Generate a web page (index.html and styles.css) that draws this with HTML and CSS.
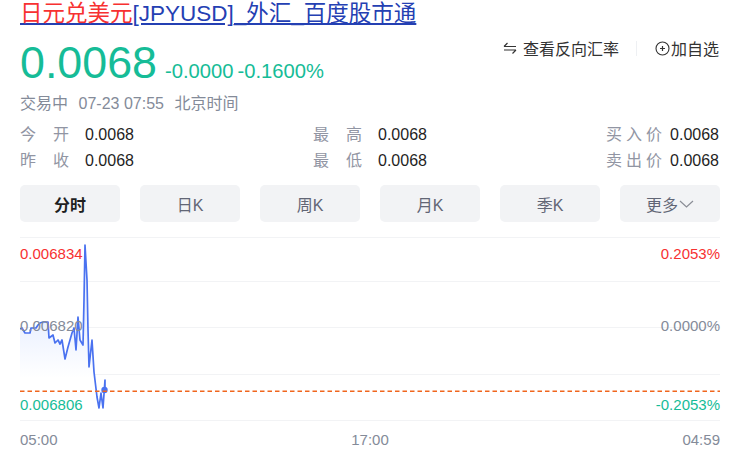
FILE: index.html
```html
<!DOCTYPE html>
<html lang="zh">
<head>
<meta charset="utf-8">
<title>日元兑美元</title>
<link rel="stylesheet" href="styles.css">
</head>
<body>
<main class="page">
  <h1 class="title"><a href="#"><span class="hl">日元兑美元</span>[JPYUSD]_外汇_百度股市通</a></h1>
  <section class="quote">
    <div class="price-row">
      <span class="price">0.0068</span>
      <span class="change">-0.0000</span>
      <span class="change">-0.1600%</span>
    </div>
    <div class="actions">
      <span class="action">
        <svg class="swap" width="14" height="12" viewBox="0 0 14 12"><path d="M1 4.5h12M1 4.5l3.5-3.5M13 8H1M13 8l-3.5 3.5" fill="none" stroke="#333" stroke-width="1.2"/></svg>
        查看反向汇率
      </span>
      <span class="sep"></span>
      <span class="action add">
        <svg width="15" height="15" viewBox="0 0 15 15"><circle cx="7.5" cy="7.5" r="6.5" fill="none" stroke="#333" stroke-width="1.1"/><path d="M5 7.5h5M7.5 5v5" stroke="#333" stroke-width="1.2"/></svg>加自选
      </span>
    </div>
  </section>
  <div class="status"><span>交易中</span><span>07-23 07:55</span><span>北京时间</span></div>
  <section class="stats">
    <div class="stat s1"><span class="k"><i>今</i><i>开</i></span><span class="v">0.0068</span></div>
    <div class="stat s2"><span class="k"><i>最</i><i>高</i></span><span class="v">0.0068</span></div>
    <div class="stat s3"><span class="k"><i>买</i><i>入</i><i>价</i></span><span class="v">0.0068</span></div>
    <div class="stat s1"><span class="k"><i>昨</i><i>收</i></span><span class="v">0.0068</span></div>
    <div class="stat s2"><span class="k"><i>最</i><i>低</i></span><span class="v">0.0068</span></div>
    <div class="stat s3"><span class="k"><i>卖</i><i>出</i><i>价</i></span><span class="v">0.0068</span></div>
  </section>
  <nav class="tabs">
    <span class="tab active">分时</span>
    <span class="tab">日K</span>
    <span class="tab">周K</span>
    <span class="tab">月K</span>
    <span class="tab">季K</span>
    <span class="tab">更多<svg width="15" height="8" viewBox="0 0 15 8"><path d="M1 1l6.5 6L14 1" fill="none" stroke="#8a8d96" stroke-width="1.2"/></svg></span>
  </nav>
  <section class="chart">
    <svg class="plot" width="700" height="186" viewBox="20 236 700 186">
      <defs>
        <linearGradient id="fade" gradientUnits="userSpaceOnUse" x1="0" y1="320" x2="0" y2="378">
          <stop offset="0" stop-color="#eaf0ff"/>
          <stop offset="1" stop-color="#ffffff"/>
        </linearGradient>
      </defs>
      <path stroke="#f2f3f5" d="M20 237.5H720M20 281.5H720M20 327.5H720M20 374.5H720M20 420.5H720"/>
      <path fill="url(#fade)" d="M20 329L22 328L25 333L30 333L31 328L36 328L38 325L40 323L43 322L48 322L49 338L53 335L55 343L58 340L60 344L62 340L65 359L68 347L72 333L74 328L76 350L78 317L80 340L83 345L84 300L85 245L87 330L89 367L92 340L94 372L97 397L99 408L101 393L103 408L105 380L105 420L20 420Z"/>
      <path class="line" d="M20 329L22 328L25 333L30 333L31 328L36 328L38 325L40 323L43 322L48 322L49 338L53 335L55 343L58 340L60 344L62 340L65 359L68 347L72 333L74 328L76 350L78 317L80 340L83 345L84 300L85 245L87 280L88 330L89 367L92 340L94 372L97 397L99 408L101 393L103 408L105 380L105 390"/>
      <circle cx="104.500" cy="390" r="3.2" fill="#4a72f0"/>
      <path d="M20 391.300H720" stroke="#f0661e" stroke-width="1.5" stroke-dasharray="4.500 3"/>
    </svg>
    <span class="lbl left up l1">0.006834</span>
    <span class="lbl left mid l2">0.006820</span>
    <span class="lbl left down l3">0.006806</span>
    <span class="lbl right up l1">0.2053%</span>
    <span class="lbl right mid l2">0.0000%</span>
    <span class="lbl right down l3">-0.2053%</span>
    <div class="axis"><span>05:00</span><span>17:00</span><span>04:59</span></div>
  </section>
</main>
</body>
</html>
```
FILE: styles.css
```css
* { box-sizing: border-box; }
html, body { margin: 0; padding: 0; background: #fff; }
body { font-family: "Liberation Sans", "Noto Sans CJK SC", sans-serif; color: #1f1f1f; overflow: hidden; }
i { font-style: normal; }
.page { width: 700px; margin-left: 20px; display: flex; flex-direction: column; }
.title { margin: 0; font-size: 22.5px; font-weight: 400; line-height: 28px; white-space: nowrap; }
.title a { color: #2440b3; text-decoration: underline; }
.hl { color: #f73131; }
.quote { display: flex; justify-content: space-between; align-items: flex-start; margin-top: 8px; height: 50px; }
.price-row { display: flex; align-items: baseline; gap: 4px; color: #16bc97; }
.price { font-size: 44.8px; line-height: 52px; margin-right: 4px; }
.change { font-size: 20.2px; }
.actions { display: flex; align-items: center; font-size: 16px; color: #333; margin: 0 1px 0 0; }
.action { display: flex; align-items: center; gap: 6px; }
.add { gap: 1px; }
.sep { width: 1px; height: 15px; background: #eef0f3; margin: 0 18px 0 17px; }
.status { display: flex; gap: 10.500px; font-size: 16px; line-height: 20px; color: #848b99; margin-top: 8px; }
.stats { display: grid; grid-template-columns: 293px 293px 113px; margin-top: 11px; row-gap: 6px; }
.stat { display: flex; font-size: 16px; line-height: 20px; color: #1f1f1f; }
.k { color: #9195a3; display: flex; justify-content: space-between; }
.s1 .k, .s2 .k { width: 49px; margin-right: 16px; }
.s3 .k { width: 56px; margin-right: 8px; }
.s3 { justify-content: flex-end; }
.tabs { display: flex; justify-content: space-between; margin-top: 14px; }
.tab { width: 100px; height: 37px; background: #f2f3f5; border-radius: 5px; display: flex; align-items: center; justify-content: center; font-size: 16px; color: #626675; gap: 1px; }
.tab.active { font-weight: 700; color: #1f1f1f; }
.chart { position: relative; margin-top: 14px; height: 225px; }
.plot { display: block; position: absolute; left: 0; top: 0; }
.line { fill: none; stroke: #4a72f0; stroke-width: 1.7; stroke-linejoin: round; }
.lbl { position: absolute; font-size: 15px; line-height: 17px; }
.left { left: 0; }
.right { right: 0; }
.up { color: #f73131; }
.mid { color: #848b99; }
.down { color: #16bc97; }
.l1 { top: 9px; }
.l2 { top: 81px; }
.l3 { top: 160px; }
.axis { position: absolute; left: 0; right: 0; top: 195px; display: flex; justify-content: space-between; font-size: 15px; line-height: 17px; color: #848b99; }
```
